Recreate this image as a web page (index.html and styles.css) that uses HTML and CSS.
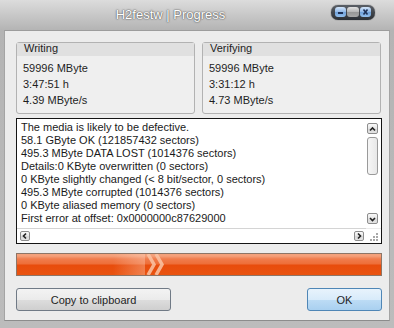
FILE: index.html
```html
<!DOCTYPE html>
<html lang="en">
<head>
    <meta charset="UTF-8">
    <title>H2festw | Progress</title>
    <link rel="stylesheet" href="styles.css">
</head>
<body>
    <div class="window">
        <div class="titlebar">
            <div class="title">H2festw | Progress</div>
            <div class="caption-btns">
                <span class="cbtn cbtn-blue">
                    <svg width="11" height="10" viewBox="0 0 11 10"><rect x="3" y="5" width="5" height="2" fill="#1c2f55"/></svg>
                </span>
                <span class="cbtn cbtn-gray"></span>
                <span class="cbtn cbtn-blue">
                    <svg width="11" height="10" viewBox="0 0 11 10"><path d="M3.5 2.5 L7.5 7.5 M7.5 2.5 L3.5 7.5" stroke="#1c2f55" stroke-width="1.6"/></svg>
                </span>
            </div>
        </div>

        <div class="client">
            <div class="groups">
                <div class="group">
                    <div class="group-head">Writing</div>
                    <div class="group-body">
                        <div>59996 MByte</div>
                        <div>3:47:51 h</div>
                        <div>4.39 MByte/s</div>
                    </div>
                </div>
                <div class="group">
                    <div class="group-head">Verifying</div>
                    <div class="group-body">
                        <div>59996 MByte</div>
                        <div>3:31:12 h</div>
                        <div>4.73 MByte/s</div>
                    </div>
                </div>
            </div>

            <div class="log">
                <div class="log-text">
                    <div>The media is likely to be defective.</div>
                    <div>58.1 GByte OK (121857432 sectors)</div>
                    <div>495.3 MByte DATA LOST (1014376 sectors)</div>
                    <div>Details:0 KByte overwritten (0 sectors)</div>
                    <div>0 KByte slightly changed (&lt; 8 bit/sector, 0 sectors)</div>
                    <div>495.3 MByte corrupted (1014376 sectors)</div>
                    <div>0 KByte aliased memory (0 sectors)</div>
                    <div>First error at offset: 0x0000000c87629000</div>
                </div>
                <div class="vscroll">
                    <span class="sbtn">
                        <svg width="9" height="8" viewBox="0 0 9 8"><path d="M2 5.5 L4.5 3 L7 5.5" fill="none" stroke="#222" stroke-width="1.6"/></svg>
                    </span>
                    <span class="thumb"></span>
                    <span class="vspace"></span>
                    <span class="sbtn">
                        <svg width="9" height="8" viewBox="0 0 9 8"><path d="M2 3 L4.5 5.5 L7 3" fill="none" stroke="#222" stroke-width="1.6"/></svg>
                    </span>
                </div>
                <div class="hscroll">
                    <span class="sbtn sbtn-h">
                        <svg width="8" height="8" viewBox="0 0 8 8"><path d="M5 1.5 L2.5 4 L5 6.5" fill="none" stroke="#222" stroke-width="1.6"/></svg>
                    </span>
                    <span class="hspace"></span>
                    <span class="sbtn sbtn-h">
                        <svg width="8" height="8" viewBox="0 0 8 8"><path d="M3 1.5 L5.5 4 L3 6.5" fill="none" stroke="#222" stroke-width="1.6"/></svg>
                    </span>
                </div>
                <div class="grip">
                    <svg width="11" height="11" viewBox="0 0 11 11">
                        <rect x="8" y="2" width="2" height="2" fill="#a8a8a8"/>
                        <rect x="5" y="5" width="2" height="2" fill="#a8a8a8"/>
                        <rect x="8" y="5" width="2" height="2" fill="#a8a8a8"/>
                        <rect x="2" y="8" width="2" height="2" fill="#a8a8a8"/>
                        <rect x="5" y="8" width="2" height="2" fill="#a8a8a8"/>
                        <rect x="8" y="8" width="2" height="2" fill="#a8a8a8"/>
                    </svg>
                </div>
            </div>

            <div class="progress">
                <div class="glow"></div>
                <svg class="chevrons" width="22" height="21" viewBox="0 0 22 21">
                    <path d="M3 0 L9 10.5 L3 21" fill="none" stroke="#f9c4a6" stroke-width="3.5" opacity="0.85"/>
                    <path d="M11 0 L17 10.5 L11 21" fill="none" stroke="#f9c4a6" stroke-width="3.5" opacity="0.85"/>
                </svg>
            </div>

            <div class="actions">
                <button class="btn btn-copy">Copy to clipboard</button>
                <button class="btn btn-ok">OK</button>
            </div>
        </div>
    </div>
</body>
</html>
```

FILE: styles.css
```css
body {
    margin: 0;
    font-family: "Liberation Sans", Arial, sans-serif;
    font-size: 11px;
    color: #1e1e1e;
    background-color: #bdbdbd;
}
.window {
    width: 394px;
    height: 328px;
    box-sizing: border-box;
    padding: 0 4px 7px 4px;
    background: linear-gradient(to bottom, #dcdcdc 0px, #b4b4b4 30px, #bcbcbc 100%);
}
.titlebar {
    height: 30px;
    display: flex;
    align-items: flex-start;
    margin: 0 -4px;
}
.title {
    flex: 1;
    text-align: center;
    padding-left: 10px;
    line-height: 30px;
    font-size: 13px;
    color: #ffffff;
    text-shadow: 0 0 2px #555, 0 0 1px #444;
}
.caption-btns {
    display: flex;
    gap: 1px;
    margin: 5px 19px 0 0;
    padding: 2px 4px;
    height: 11px;
    border-radius: 7px;
    background: linear-gradient(to bottom, #5a5f66, #2b2f35);
    box-shadow: 0 0 1px #222;
}
.cbtn {
    display: block;
    width: 11px;
    height: 10px;
    border-radius: 3px;
}
.cbtn svg {
    display: block;
}
.cbtn-blue {
    background: linear-gradient(to bottom, #d3e5fa, #8fb7e6 50%, #6d9fd8 51%, #94c0ee);
}
.cbtn-gray {
    width: 12px;
    background: linear-gradient(to bottom, #e2e2e2, #b4b4b4 50%, #969696 51%, #a8a8a8);
}
.client {
    height: 291px;
    box-sizing: border-box;
    padding: 11px 8px 0 11px;
    background-color: #ececec;
    border-top: 1px solid #9c9c9c;
    border-left: 1px solid #a4a4a4;
    border-right: 1px solid #a4a4a4;
    border-bottom: 1px solid #8c8c8c;
}
.groups {
    display: flex;
    gap: 7px;
    width: 365px;
}
.group {
    flex: 1;
    height: 72px;
    box-sizing: border-box;
    border: 1px solid #b2b2b2;
    border-radius: 3px;
    background-color: #efefef;
}
.group-head {
    height: 13px;
    line-height: 11px;
    padding-left: 7px;
    background-color: #e0e0e0;
}
.group-body {
    padding: 4px 0 0 6px;
    line-height: 16px;
}
.log {
    margin-top: 4px;
    width: 366px;
    height: 126px;
    box-sizing: border-box;
    border: 1px solid #141414;
    background-color: #ffffff;
    display: grid;
    grid-template-columns: 1fr 15px;
    grid-template-rows: 1fr 15px;
}
.log-text {
    padding: 2px 0 0 4px;
    line-height: 13px;
    white-space: nowrap;
    overflow: hidden;
    color: #1a1a1a;
}
.vscroll {
    display: flex;
    flex-direction: column;
    padding: 4px 3px 4px 1px;
}
.sbtn {
    display: flex;
    align-items: center;
    justify-content: center;
    height: 9px;
    border: 1px solid #8d8d8d;
    border-radius: 2px;
    background: linear-gradient(to bottom, #fafafa, #e6e6e6 50%, #d8d8d8 51%, #e4e4e4);
}
.sbtn svg {
    display: block;
}
.thumb {
    margin-top: 3px;
    height: 36px;
    border: 1px solid #9a9a9a;
    border-radius: 3px;
    background: linear-gradient(to right, #f6f6f6, #e8e8e8);
}
.vspace {
    flex: 1;
}
.hscroll {
    display: flex;
    align-items: flex-start;
    padding: 2px 2px 0 3px;
    border-top: 1px solid #d4d4d4;
}
.sbtn-h {
    width: 8px;
    height: 8px;
}
.hspace {
    flex: 1;
}
.grip {
    display: flex;
    align-items: center;
    justify-content: center;
    border-top: 1px solid #ececec;
}
.progress {
    margin-top: 9px;
    width: 366px;
    height: 23px;
    box-sizing: border-box;
    border: 1px solid #8d7566;
    display: flex;
    background: linear-gradient(to bottom, #f3a07a 0px, #f4a07a 2px, #f07c4c 5px, #ee6e38 10px, #e84c0c 11px, #e95310 21px);
}
.glow {
    width: 128px;
    background: linear-gradient(to right, rgba(255, 255, 255, 0) 75%, rgba(255, 220, 200, 0.35) 100%);
}
.chevrons {
    display: block;
}
.actions {
    margin-top: 12px;
    width: 366px;
    display: flex;
    justify-content: space-between;
}
.btn {
    height: 23px;
    font-family: "Liberation Sans", Arial, sans-serif;
    font-size: 11px;
    color: #1e1e1e;
    border-radius: 3px;
    padding: 0;
}
.btn-copy {
    width: 155px;
    border: 1px solid #707a86;
    background: linear-gradient(to bottom, #f3f3f3, #ebebeb 50%, #dddddd 51%, #cfcfcf);
}
.btn-ok {
    width: 75px;
    border: 1px solid #4f86b6;
    background: linear-gradient(to bottom, #e8f3fc, #d8ebfa 50%, #bddcf5 51%, #a9d0f0);
}
```
